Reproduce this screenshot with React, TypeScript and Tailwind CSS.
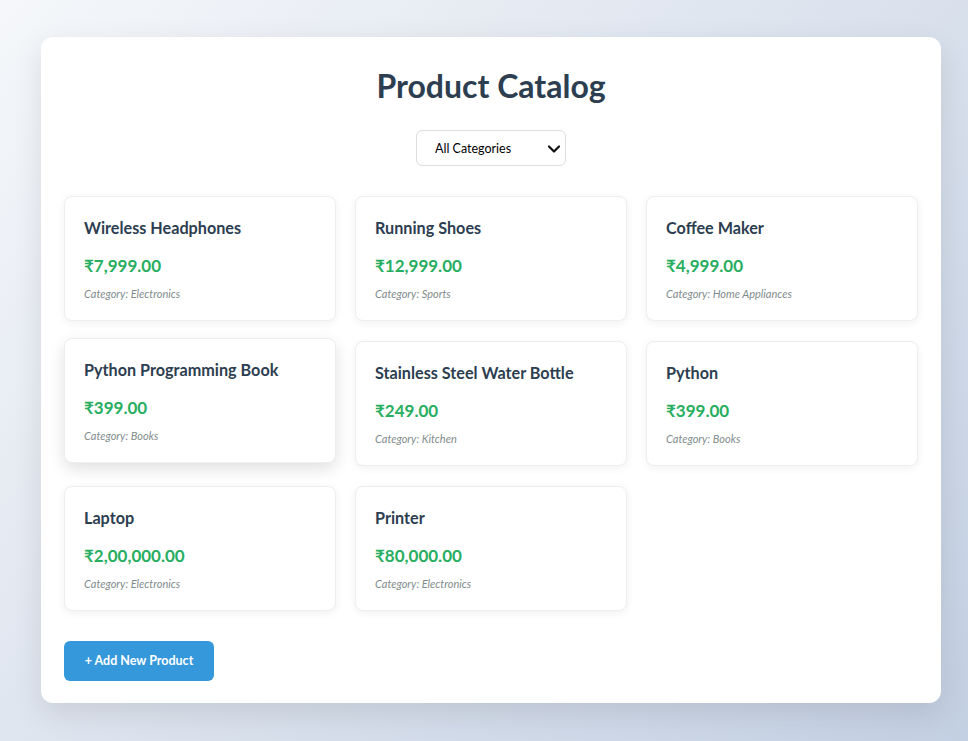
import React, { useState } from "react";

type Product = {
  id: number;
  name: string;
  price: string;
  category: string;
};

const products: Product[] = [
  { id: 1, name: "Wireless Headphones", price: "₹7,999.00", category: "Electronics" },
  { id: 2, name: "Running Shoes", price: "₹12,999.00", category: "Sports" },
  { id: 3, name: "Coffee Maker", price: "₹4,999.00", category: "Home Appliances" },
  { id: 4, name: "Python Programming Book", price: "₹399.00", category: "Books" },
  { id: 5, name: "Stainless Steel Water Bottle", price: "₹249.00", category: "Kitchen" },
  { id: 6, name: "Python", price: "₹399.00", category: "Books" },
  { id: 7, name: "Laptop", price: "₹2,00,000.00", category: "Electronics" },
  { id: 8, name: "Printer", price: "₹80,000.00", category: "Electronics" },
];

export default function App() {
  const [category, setCategory] = useState("all");
  const [hovered, setHovered] = useState<number | null>(4);

  const visible = products.filter((p) => category === "all" || p.category === category);

  return (
    <div
      className="min-h-screen bg-[linear-gradient(135deg,#f5f7fa_0%,#c3cfe2_100%)] pt-[37px] pl-[41px] pb-[38px]"
      style={{ fontFamily: 'Lato, "Noto Sans", sans-serif' }}
    >
      <div className="w-[900px] bg-white rounded-[12px] shadow-[0_10px_30px_rgba(0,0,0,0.1)] px-[23px] pt-[28px] pb-[22px]">
        {/* Header */}
        <h1 className="text-center text-[32px] leading-[42px] font-bold text-[#2c3e50]">Product Catalog</h1>

        <div className="flex justify-center mt-[23px]">
          <div className="relative w-[150px] h-[36px]">
            <select
              value={category}
              onChange={(e) => setCategory(e.target.value)}
              className="appearance-none w-full h-full pl-[18px] pr-8 pt-[2px] border border-[#dddddd] rounded-[6px] bg-white text-[12.5px] text-black outline-none"
            >
              <option value="all">All Categories</option>
              <option value="Electronics">Electronics</option>
              <option value="Sports">Sports</option>
              <option value="Home Appliances">Home Appliances</option>
              <option value="Books">Books</option>
              <option value="Kitchen">Kitchen</option>
            </select>
            <svg
              className="absolute right-[5px] top-[13px] pointer-events-none"
              width="14"
              height="12"
              viewBox="0 0 14 12"
              fill="none"
            >
              <path d="M2 3.5 L7 8.5 L12 3.5" stroke="#111" strokeWidth="2.2" strokeLinecap="round" strokeLinejoin="round" />
            </svg>
          </div>
        </div>

        {/* Product Grid */}
        <div className="grid grid-cols-3 gap-x-[19px] gap-y-[20px] mt-[30px]">
          {visible.map((p) => (
            <div
              key={p.id}
              onMouseEnter={() => setHovered(p.id)}
              onMouseLeave={() => setHovered(null)}
              className={
                "h-[125px] bg-white border border-[#eeeeee] rounded-[8px] px-[19px] pt-[19px] transition-all " +
                (hovered === p.id
                  ? "-translate-y-[3px] shadow-[0_6px_16px_rgba(0,0,0,0.12)]"
                  : "shadow-[0_2px_8px_rgba(0,0,0,0.06)]")
              }
            >
              <h3 className="text-[16.2px] leading-[24px] font-bold text-[#2c3e50]">{p.name}</h3>
              <p className="mt-[14px] text-[17px] leading-[24px] font-bold text-[#27ae60]">{p.price}</p>
              <p className="mt-[8px] text-[11px] leading-[16px] italic text-[#7f8c8d]">Category: {p.category}</p>
            </div>
          ))}
        </div>

        <button className="mt-[30px] w-[150px] h-[40px] bg-[#3498db] hover:bg-[#2980b9] text-white text-[12.5px] font-bold rounded-[6px]">
          + Add New Product
        </button>
      </div>
    </div>
  );
}
